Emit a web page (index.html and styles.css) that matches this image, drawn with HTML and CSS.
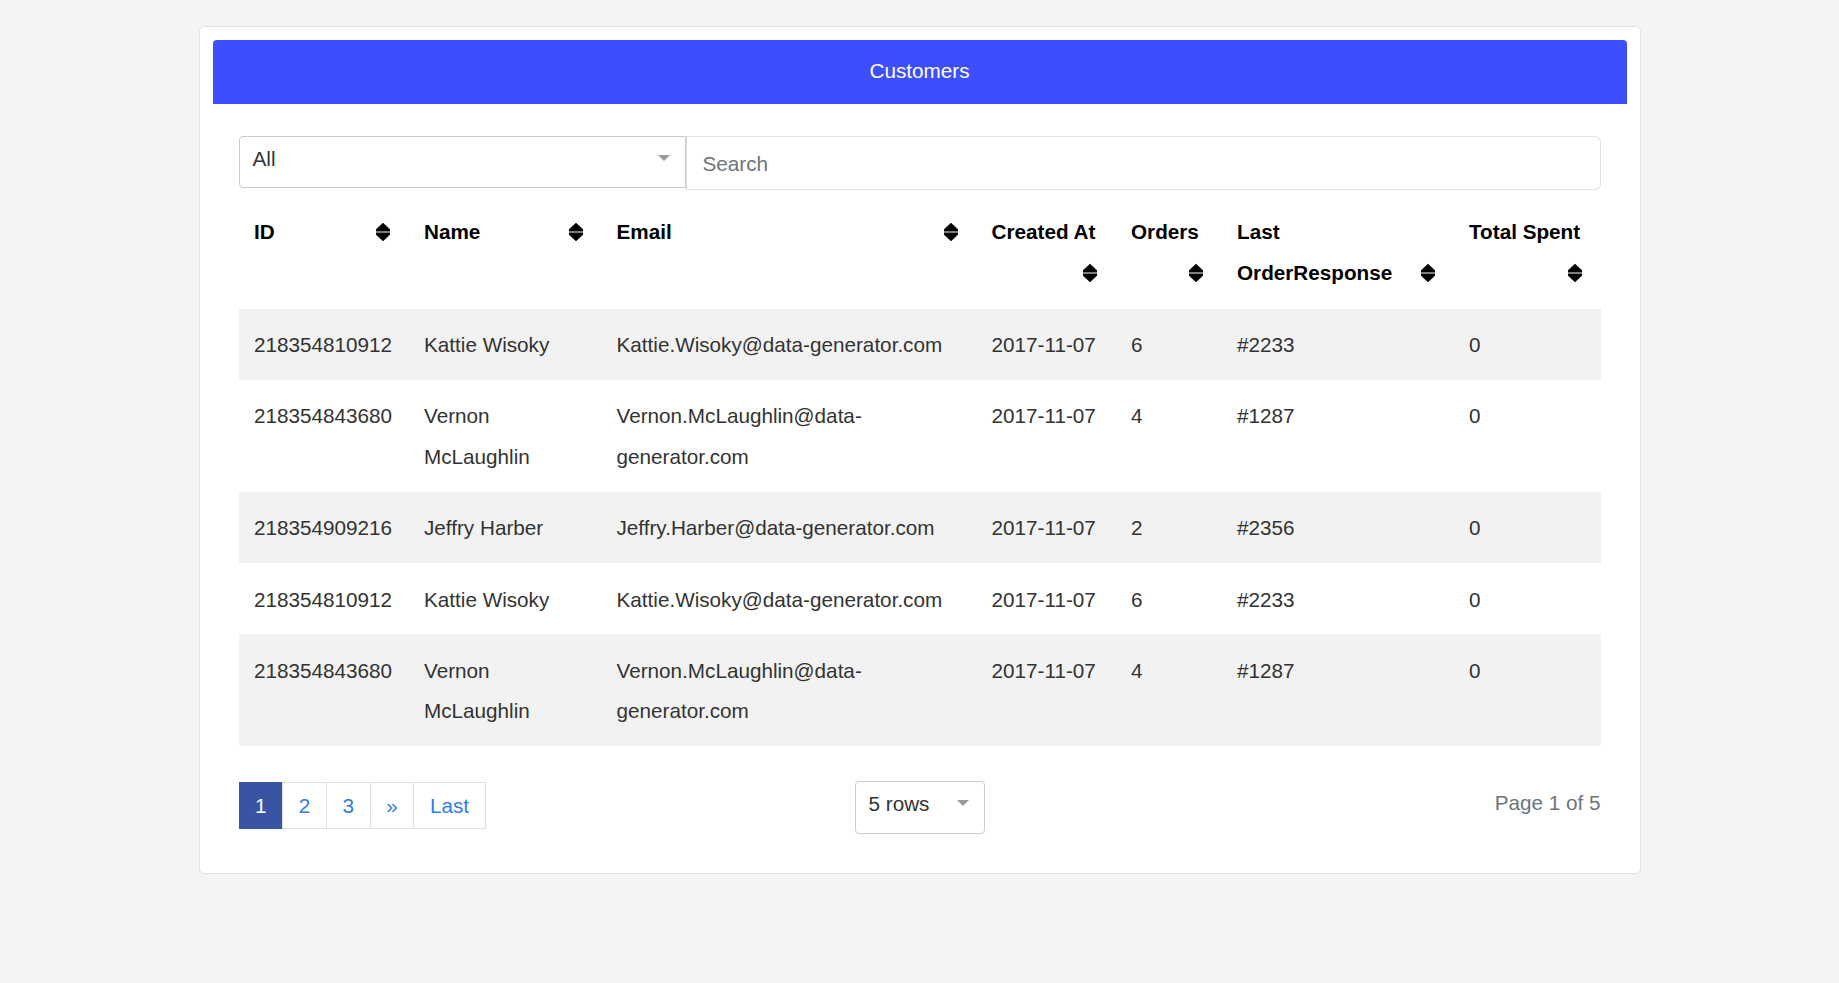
FILE: index.html
```html
<!DOCTYPE html>
<html lang="en">
<head>
<meta charset="utf-8">
<title>Customers</title>
<link rel="stylesheet" href="styles.css">
</head>
<body>
<div class="card">
  <div class="card-header">Customers</div>
  <div class="card-body">
    <div class="filters">
      <div class="select select-all">
        <span>All</span>
        <svg class="caret" width="12" height="6" viewBox="0 0 12 6"><path d="M0 0H12L6 6Z"/></svg>
      </div>
      <div class="search">Search</div>
    </div>

    <table class="grid">
      <colgroup>
        <col class="c-id"><col class="c-name"><col class="c-email"><col class="c-created"><col class="c-orders"><col class="c-last"><col class="c-total">
      </colgroup>
      <thead>
        <tr>
          <th>ID<svg class="sort" viewBox="0 0 14 20"><path d="M7 1L14 7.6V9.2H0V7.6Z"/><path d="M0 10.8H14V12.4L7 19L0 12.4Z"/></svg></th>
          <th>Name<svg class="sort" viewBox="0 0 14 20"><path d="M7 1L14 7.6V9.2H0V7.6Z"/><path d="M0 10.8H14V12.4L7 19L0 12.4Z"/></svg></th>
          <th>Email<svg class="sort" viewBox="0 0 14 20"><path d="M7 1L14 7.6V9.2H0V7.6Z"/><path d="M0 10.8H14V12.4L7 19L0 12.4Z"/></svg></th>
          <th>Created At<svg class="sort" viewBox="0 0 14 20"><path d="M7 1L14 7.6V9.2H0V7.6Z"/><path d="M0 10.8H14V12.4L7 19L0 12.4Z"/></svg></th>
          <th>Orders<svg class="sort" viewBox="0 0 14 20"><path d="M7 1L14 7.6V9.2H0V7.6Z"/><path d="M0 10.8H14V12.4L7 19L0 12.4Z"/></svg></th>
          <th>Last OrderResponse<svg class="sort" viewBox="0 0 14 20"><path d="M7 1L14 7.6V9.2H0V7.6Z"/><path d="M0 10.8H14V12.4L7 19L0 12.4Z"/></svg></th>
          <th>Total Spent<svg class="sort" viewBox="0 0 14 20"><path d="M7 1L14 7.6V9.2H0V7.6Z"/><path d="M0 10.8H14V12.4L7 19L0 12.4Z"/></svg></th>
        </tr>
      </thead>
      <tbody>
        <tr><td>218354810912</td><td>Kattie Wisoky</td><td>Kattie.Wisoky@data-generator.com</td><td>2017-11-07</td><td>6</td><td>#2233</td><td>0</td></tr>
        <tr><td>218354843680</td><td>Vernon McLaughlin</td><td>Vernon.McLaughlin@data-generator.com</td><td>2017-11-07</td><td>4</td><td>#1287</td><td>0</td></tr>
        <tr><td>218354909216</td><td>Jeffry Harber</td><td>Jeffry.Harber@data-generator.com</td><td>2017-11-07</td><td>2</td><td>#2356</td><td>0</td></tr>
        <tr><td>218354810912</td><td>Kattie Wisoky</td><td>Kattie.Wisoky@data-generator.com</td><td>2017-11-07</td><td>6</td><td>#2233</td><td>0</td></tr>
        <tr><td>218354843680</td><td>Vernon McLaughlin</td><td>Vernon.McLaughlin@data-generator.com</td><td>2017-11-07</td><td>4</td><td>#1287</td><td>0</td></tr>
      </tbody>
    </table>

    <div class="footer">
      <ul class="pagination">
        <li class="page active">1</li>
        <li class="page">2</li>
        <li class="page">3</li>
        <li class="page">&raquo;</li>
        <li class="page">Last</li>
      </ul>
      <div class="select select-rows">
        <span>5 rows</span>
        <svg class="caret" width="12" height="6" viewBox="0 0 12 6"><path d="M0 0H12L6 6Z"/></svg>
      </div>
      <div class="page-info">Page 1 of 5</div>
    </div>
  </div>
</div>
</body>
</html>
```
FILE: styles.css
```css
html, body {
  margin: 0;
  padding: 0;
}

body {
  background: #f4f4f4;
  font-family: "Liberation Sans", Arial, sans-serif;
  font-size: 20.7px;
  color: #333;
}

.card {
  box-sizing: border-box;
  width: 1442px;
  margin: 26px auto 0;
  background: #fff;
  border: 1px solid #e1e1e1;
  border-radius: 5px;
  padding: 13px 13px 39px;
}

.card-header {
  height: 64px;
  line-height: 62px;
  background: #3d4efe;
  color: #fff;
  text-align: center;
  border-radius: 4px 4px 0 0;
}

.card-body {
  padding: 32px 26px 0;
}

.filters {
  display: flex;
  align-items: flex-start;
}

.select {
  box-sizing: border-box;
  display: flex;
  justify-content: space-between;
  align-items: flex-start;
  border: 1px solid #cccccc;
  border-radius: 4px;
  background: #fff;
  color: #333;
  line-height: 44px;
  padding: 0 15px 0 13px;
}

.select .caret {
  fill: #999;
  margin-top: 18px;
  flex: none;
}

.select-all {
  width: 447px;
  height: 52px;
  border-radius: 4px 0 0 4px;
}

.search {
  box-sizing: border-box;
  flex: 1;
  height: 54px;
  line-height: 54px;
  border: 1px solid #e2e2e2;
  border-left-color: #dcdcdc;
  border-radius: 0 6px 6px 0;
  padding: 0 16px;
  color: #6c757d;
}

.grid {
  width: 100%;
  margin-top: 5px;
  border-collapse: collapse;
  table-layout: fixed;
}

.c-id { width: 170px; }
.c-name { width: 192.5px; }
.c-email { width: 375px; }
.c-created { width: 139.5px; }
.c-orders { width: 106px; }
.c-last { width: 232px; }
.c-total { width: 147px; }

.grid th,
.grid td {
  padding: 16.4px 15.5px 14.4px;
  line-height: 40.5px;
  text-align: left;
  vertical-align: top;
}

.grid th {
  padding-top: 17px;
  padding-bottom: 13.8px;
  color: #000;
  font-weight: bold;
  border-bottom: 2px solid #fff;
}

.grid td {
  color: #333;
}

.grid tbody tr:nth-child(odd) {
  background: #f2f2f2;
}

.sort {
  float: right;
  width: 14px;
  height: 20px;
  margin: 10px 3px 0 6px;
  fill: #000;
  stroke: #000;
  stroke-width: 0.5;
  stroke-linejoin: round;
}

.footer {
  display: grid;
  grid-template-columns: 1fr auto 1fr;
  align-items: start;
  margin-top: 34.5px;
}

.pagination {
  display: flex;
  list-style: none;
  margin: 1px 0 0;
  padding: 0;
}

.page {
  box-sizing: border-box;
  height: 47px;
  line-height: 45px;
  padding: 0 15.6px;
  border: 1px solid #dee2e6;
  margin-left: -1px;
  color: #2b7de9;
  background: #fff;
}

.page:first-child {
  margin-left: 0;
}

.page.active {
  background: #3a54a4;
  border-color: #3a54a4;
  color: #fff;
}

.select-rows {
  width: 130px;
  height: 53px;
}

.page-info {
  justify-self: end;
  line-height: 43px;
  color: #6c757d;
}
```
